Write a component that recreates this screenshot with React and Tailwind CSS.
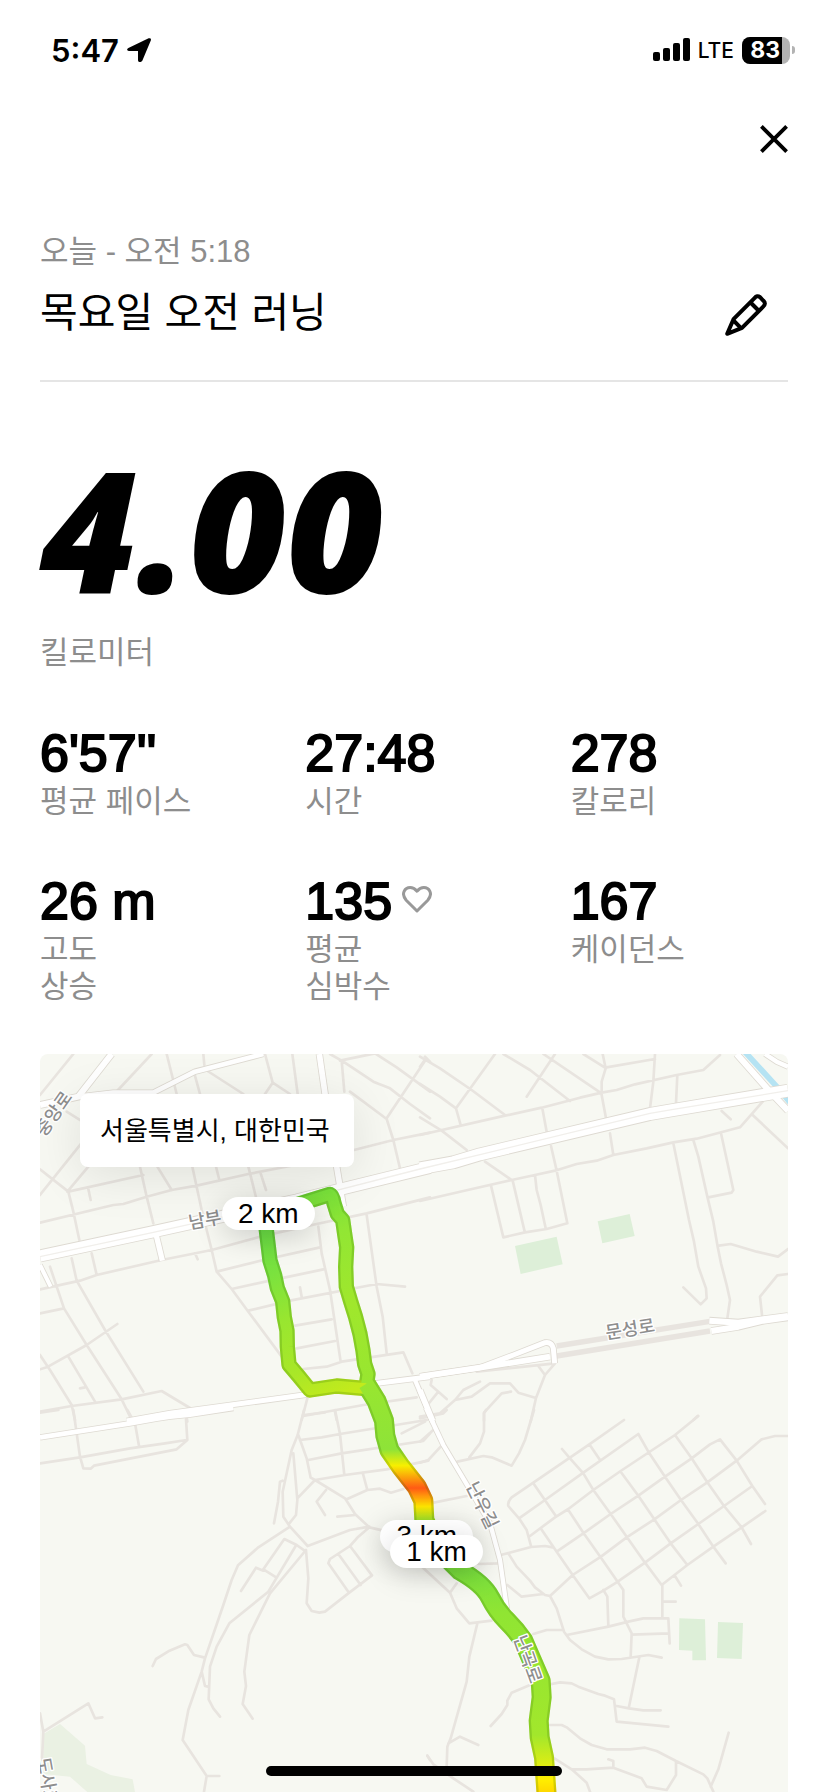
import React from "react";

const stats = [
  { value: "6'57''", label: ["평균 페이스"] },
  { value: "27:48", label: ["시간"] },
  { value: "278", label: ["칼로리"] },
  { value: "26 m", label: ["고도", "상승"] },
  { value: "135", label: ["평균", "심박수"], heart: true },
  { value: "167", label: ["케이던스"] },
];

// Streets are drawn per map tile, each tile has its own origin
const tiles = [
  {
    id: "nw",
    origin: "translate(-30 -42)",
    minor:
      "M30 165L130 42M250 165L365 42M410 42L440 162M520 42L523 75M528 90L640 162M493 100L510 162M705 42L728 128L705 162M728 128L780 162M787 42L803 162M900 42L940 65L1030 125L1080 145L1140 192L1200 235M930 62L1035 40L1100 82L1200 155M935 62L943 155M1190 55L1070 235M960 155L1070 237L1090 300L1110 385M972 330L1090 300L1200 278M1185 50L1200 65M30 388L115 455L130 515L148 600M30 465L190 265L110 215M112 455L175 380M115 455L340 405M175 447L182 480M330 380L350 470L370 550M382 380L425 450M30 548L250 495L280 492L350 470L425 450L500 437L655 402L780 378M487 380L515 510L545 630L560 695L605 747L655 815L755 950M558 380L568 420M655 380L680 480M692 400L708 450M30 748L150 722L200 705L395 660L545 630L690 590L860 552L1010 520L1200 472M125 655L140 722L225 870L340 1055M185 640L200 705M495 640L503 658M560 695L700 660L870 622M605 747L720 722L880 688M655 812L780 782L1040 732L1125 740M810 742L815 770M795 857L905 838M800 925L915 903M865 560L875 640L900 750L932 965M1010 525L1040 740L1058 830L1070 940M820 987L890 980L935 965L1120 937L1147 1000M30 820L102 805M30 945L60 990L125 1095L135 1140M30 988L50 982L170 915L262 852M60 680L102 805L170 915L275 1078L305 1140M115 950L195 1085M150 1045L165 1042M30 1115L125 1098L275 1078L395 1053L490 1110M470 1130L472 1145M832 1075L815 1140M820 1128L1000 1095L1160 1072M915 1115L920 1140",
    major: [
      { d: "M30 195L145 170L245 42", w: 18 },
      { d: "M145 170L250 158L370 158L495 95L700 42", w: 14 },
      { d: "M868 42L885 160L920 380L940 500", w: 17 },
      { d: "M375 570L397 662", w: 16 },
      { d: "M30 675L62 740", w: 12 },
      { d: "M30 648L370 575L800 480L1200 382", w: 34 },
      { d: "M290 1143L420 1120L820 1065L1000 1035L1200 1010", w: 15 },
      { d: "M1155 1020L1210 1150", w: 13 },
    ],
  },
  {
    id: "ne",
    origin: "translate(1140 -42)",
    minor:
      "M0 80L18 55M0 50L60 85L155 150L255 225M225 42L108 205L122 255M0 132L60 170L108 205M250 42L330 90L450 183M405 42L320 170M370 42L540 157M490 42L555 83L705 57M548 42L557 85L545 125L545 165L558 235M0 285L255 227L365 203L480 173L545 158L590 150L645 133L770 105L850 90L900 45M705 42L700 125L690 205M772 105L768 190M0 232L65 272L140 330M367 205L380 275M570 280L580 345M393 318L410 392L442 550L380 567L315 577L250 592L213 437M195 365L275 420M0 483L130 453L275 420L345 405L405 392L470 372L530 362L580 345L680 325L760 307L830 296L960 262L1028 185M278 422L314 575M345 405L350 450L362 495L377 565M905 213L932 238M998 225L1104 325M760 310L807 540L822 605L835 680L858 745L860 775L842 793L790 742M820 300L835 350L862 470L880 545L893 620L903 670L920 735L930 780L922 835M903 280L940 450L935 458L865 472M897 617L932 612L1010 635L1074 650L1104 627M1104 702L1072 706L1020 770L1026 825M0 1130L60 1120L105 1080L130 1050L180 1025M105 1080L155 1070L210 1030L270 1030L295 1058L348 1074M35 1020L32 1035L80 1077M55 1055L25 1092M192 1142L192 1118L245 1060L273 1055M355 978L375 1005L348 1074L332 1145M375 1005L405 970L170 995M820 1140L833 1128",
    major: [
      { d: "M1035 42L1070 65L1104 80", w: 13 },
      { d: "M0 385L100 367L180 343L690 222L760 210L1104 152", w: 36 },
      { d: "M950 42L1050 155L1104 212", w: 18 },
      { d: "M0 1010L180 983L280 945L375 908Q395 905 400 925L404 970", w: 15 },
      { d: "M0 1010L180 983L390 950", w: 17 },
      { d: "M868 842L955 848L1030 838L1104 828", w: 18 },
      { d: "M874 873L955 860L1030 842L1104 832", w: 18 },
      { d: "M0 1050L38 1142", w: 16 },
    ],
  },
  {
    id: "sw",
    origin: "translate(-30 1068)",
    minor:
      "M30 8L85 0M130 0L150 140L160 175L182 176L192 167L440 118L472 90L468 28M292 0L315 40L327 108M30 160L150 142L300 115L405 100L470 90M822 0L803 75L785 120L758 245L760 320L780 350L833 408M790 130L802 270L798 315L778 340M758 212L750 215L744 275L732 340M822 15L885 7M805 75L830 145L842 203L855 210L945 265L975 312L1018 352L1060 362M810 90L875 82L930 72L1190 30M915 0L930 72L943 195M835 150L935 130L1180 93L1200 70M855 210L945 195L1070 178L1195 152M1115 70L1185 35M855 210L802 265M888 240L860 275L885 315M998 188L1012 240L950 268M1012 240L1050 236L1083 248L1120 237M922 320L975 315M780 350L685 412L624 466L605 510L580 585L525 745L515 785L475 900L458 990L530 1098L522 1145M530 1098L568 1098M833 408L960 360L1018 350M1018 352L985 380L960 408L900 447L895 460L957 548M925 432L992 525M960 408L1026 496L955 550L885 605L868 608L845 603L830 580L835 505L828 420M828 425L800 405L763 387L700 478L735 500M633 543L678 473L700 482M797 408L715 545L598 640L560 710L540 770L536 868L550 895L570 920M828 420L720 550L658 675L643 785L648 828L638 882L668 926M368 768L378 747L415 724L465 703L472 705L492 735L525 743M515 785L525 828L534 830M40 965L175 880L195 925L217 922M30 910L40 965L36 1050M1192 1037L1200 1050",
    major: [{ d: "M30 82L300 40L380 26L420 20L480 14L610 -6", w: 14 }],
  },
  {
    id: "se",
    origin: "translate(1140 1068)",
    minor:
      "M0 25L70 10L80 0M0 95L40 60M0 158L25 150L62 110M198 0L192 10L192 65L180 100L148 142M112 155L190 138L215 142L275 167L297 130L315 90L342 0M30 280L140 258M612 30L508 103L340 218L275 262Q262 275 265 288L297 325L320 360L333 408M426 117L450 145L490 190L520 240L572 312L620 380L675 458L725 525M508 103L540 150M297 325L375 270L490 188L655 72L685 125L735 200L783 270L835 342L880 410L917 460M340 220L407 317M330 378L405 322L445 297L520 240L602 183L765 75L835 18M765 75L815 145L862 217L912 288L965 352L993 402M445 300L490 368L543 443L610 540L610 620L635 670L632 740M602 185L655 257L703 328L752 400L802 465M362 355L410 425L458 495L508 565L550 542L590 517L675 458L752 400L835 342L912 288L997 228M410 425L490 370L572 312L655 257L735 200L815 145L870 103L900 88L950 152L997 228L1035 282M390 558L458 495L543 440L620 382L703 328L783 270L862 217L950 152L1025 88L1065 78L1104 78M725 525L802 465L880 410L965 352L1036 303M765 498L783 527M242 435L333 411L375 408L398 412M175 462L240 460M265 430L290 470L330 512L345 532L375 555L390 558L410 595L432 665L450 690L485 718L525 740L565 748L605 747L685 735L725 743M262 525L305 560L370 552M340 672L380 660L430 660M440 675L565 650L625 635L670 625L745 625L749 700M550 540L562 560L565 648M727 525L727 620M727 575L767 575M635 674L747 670M0 465L90 548L110 595L148 640L215 632M110 520L90 548M172 640L148 740L140 815L92 985L82 1010L80 1070M85 1000L120 980L175 1005M658 742L627 890M212 948L245 912L262 885L262 872L275 848L330 825M380 825L420 817L455 820L475 830L535 852L555 857L582 868L590 935L745 950M590 888L627 895L670 901L722 901M385 945L425 945L440 952L480 985L515 1005L560 1018L630 1018L675 1013L710 1023L768 1053L850 1093L862 1105L880 1145M768 1053L768 1095L740 1140L680 1130L665 1105L580 1073L500 1078L455 1078L395 1040M580 1073L580 1053L565 1048M455 1078L500 1118L510 1145M872 1130L895 1078L926 968M22 1037L40 1063L100 1105L160 1145",
    major: [{ d: "M18 -6L70 105L210 340L240 450L262 605", w: 13 }],
  },
];

const routes = [
  {
    stroke: "url(#north)",
    width: 46,
    d: "M740 462L800 443L870 421Q878 424 882 448L892 480L908 498L914 540L920 580L917 638L919 698L932 742L947 790L960 840L969 890L974 930L984 960L978 1000",
  },
  {
    stroke: "url(#west)",
    width: 46,
    d: "M678 520L685 578L690 620L704 664L712 702L728 742L733 790L741 830L742 878L747 932L775 965L810 1008L890 996L978 1004",
  },
  {
    stroke: "url(#south)",
    width: 60,
    d: "M978 990L1010 1042L1032 1100L1036 1145L1048 1188L1084 1240L1130 1298L1150 1340L1153 1398L1190 1480L1260 1550Q1330 1590 1350 1630T1400 1700T1450 1760L1476 1820L1502 1880L1505 1930L1496 2000L1499 2050L1512 2110L1520 2225",
  },
];

const roadNames = [
  { text: "중앙로", at: "translate(56 190) rotate(-55)" },
  { text: "남부", at: "translate(498 516) rotate(-10)" },
  { text: "문성로", at: "translate(1773 844) rotate(-9)" },
  { text: "난우길", at: "translate(1310 1362) rotate(64)" },
  { text: "난곡로", at: "translate(1446 1822) rotate(70)" },
  { text: "도사로", at: "translate(4 2186) rotate(80)" },
];

const RunMap = () => (
  <svg viewBox="0 0 2244 2214" className="block w-full" aria-hidden="true">
    <defs>
      <linearGradient id="north" gradientUnits="userSpaceOnUse" x1="740" y1="430" x2="960" y2="1000">
        <stop offset="0" stopColor="#74e03c" />
        <stop offset="0.25" stopColor="#92e634" />
        <stop offset="0.6" stopColor="#a0e72c" />
        <stop offset="1" stopColor="#98e630" />
      </linearGradient>
      <linearGradient id="west" gradientUnits="userSpaceOnUse" x1="680" y1="520" x2="900" y2="1020">
        <stop offset="0" stopColor="#69dd45" />
        <stop offset="0.25" stopColor="#7be23e" />
        <stop offset="0.5" stopColor="#98e630" />
        <stop offset="0.8" stopColor="#a9e728" />
        <stop offset="1" stopColor="#c2ea1c" />
      </linearGradient>
      <linearGradient id="south" gradientUnits="userSpaceOnUse" x1="0" y1="990" x2="0" y2="2214">
        <stop offset="0" stopColor="#98e630" />
        <stop offset="0.16" stopColor="#8ee338" />
        <stop offset="0.2" stopColor="#f7ef00" />
        <stop offset="0.255" stopColor="#ff5a14" />
        <stop offset="0.3" stopColor="#ffe600" />
        <stop offset="0.335" stopColor="#a0e52c" />
        <stop offset="0.46" stopColor="#7ae03e" />
        <stop offset="0.56" stopColor="#90e533" />
        <stop offset="0.86" stopColor="#a2e72c" />
        <stop offset="0.92" stopColor="#d2ec18" />
        <stop offset="0.97" stopColor="#ffee00" />
        <stop offset="1" stopColor="#ffd800" />
      </linearGradient>
    </defs>

    <rect width="2244" height="2214" fill="#f7f8f2" />

    {/* parks and water */}
    <g fill="#ddefd8">
      <path d="M1425 576L1550 548L1568 631L1442 660Z" />
      <path d="M1673 502L1769 480L1784 546L1687 568Z" />
      <path d="M1918 1693L1995 1696L1998 1819H1957V1790L1917 1788Z" />
      <path d="M2034 1704L2109 1707L2105 1815L2031 1812Z" />
    </g>
    <path d="M10 2040L60 2010L135 2075L140 2130L212 2163L278 2176L285 2214H142L90 2168L10 2160Z" fill="#eaf1e3" />
    <path d="M2115 -6L2215 103L2250 145" stroke="#b5e3f3" strokeWidth="17" fill="none" />

    {/* tunnel */}
    <path d="M1550 876L2010 802M1550 906L2010 831" stroke="#e8e4df" strokeWidth="16" fill="none" />

    <g fill="none" strokeLinejoin="round" strokeLinecap="round">
      {tiles.map((t) => (
        <path key={t.id} transform={t.origin} d={t.minor} stroke="#e8e4df" strokeWidth="8" />
      ))}
    </g>
    <g fill="none" strokeLinejoin="round">
      {tiles.map((t) => (
        <g key={t.id} transform={t.origin} stroke="#dedad2">
          {t.major.map((r) => (
            <path key={r.d} d={r.d} strokeWidth={r.w + 5} />
          ))}
        </g>
      ))}
      {tiles.map((t) => (
        <g key={t.id} transform={t.origin} stroke="#ffffff">
          {t.major.map((r) => (
            <path key={r.d} d={r.d} strokeWidth={r.w} />
          ))}
        </g>
      ))}
      <path d="M0 608L340 535L770 440L1140 345L1320 302L1830 178L1900 166L2244 110" stroke="#f1efeb" strokeWidth="4" />
    </g>

    <g fill="none" strokeLinejoin="round">
      {routes.map((r) => (
        <g key={r.stroke}>
          <path d={r.d} stroke={r.stroke} strokeWidth={r.width} />
          <path d={r.d} stroke="#2d6a00" strokeOpacity="0.2" strokeWidth={r.width} />
        </g>
      ))}
      {routes.map((r) => (
        <path key={r.stroke} d={r.d} stroke={r.stroke} strokeWidth={r.width - 14} />
      ))}
    </g>

    <g
      className="font-['Noto_Sans_CJK_KR',sans-serif] font-medium"
      fontSize="54"
      fill="#8e8e8e"
      stroke="#ffffff"
      strokeWidth="8"
      strokeLinejoin="round"
      paintOrder="stroke"
      textAnchor="middle"
    >
      {roadNames.map((n) => (
        <text key={n.text} transform={n.at}>
          {n.text}
        </text>
      ))}
    </g>
  </svg>
);

const Pin = ({ children, className }) => (
  <span
    className={`absolute flex h-[33px] w-[93px] items-center justify-center rounded-full bg-white text-[28px] leading-none shadow-[0_6px_30px_rgba(0,0,0,0.18)] ${className}`}
  >
    {children}
  </span>
);

const StatusBar = () => (
  <div className="flex h-[100px] items-center justify-between pr-[33px] pl-[51px] font-['Inter',sans-serif]">
    <div className="flex items-center gap-2 text-[31px] leading-none font-semibold">
      5:47
      <svg viewBox="0 0 24 24" className="h-6 w-6">
        <path d="M1.4 10L21.600 .3Q24.600-.4 23.800 2.500L15.300 22.800Q14.300 24.300 12.400 24Q11 23.700 11 22.300V13H1.900Q.1 12.800 .1 11.600Q.2 10.600 1.400 10Z" />
      </svg>
    </div>
    <div className="flex items-center gap-2">
      <svg viewBox="0 0 37 24" className="h-6 w-[37px]">
        <rect x="0" y="14" width="7" height="9" rx="2" />
        <rect x="10" y="10" width="7" height="13" rx="2" />
        <rect x="20" y="5" width="7" height="18" rx="2" />
        <rect x="30" y="0" width="7" height="23" rx="2" />
      </svg>
      <span className="text-[21px] leading-none font-medium">LTE</span>
      <div className="flex items-center gap-[2px]">
        <div className="flex h-[27px] w-12 overflow-hidden rounded-lg bg-[#b3b3b3]">
          <span className="flex w-10 items-center justify-end bg-black pr-[2px] text-[23px] leading-none font-bold text-white">
            83
          </span>
        </div>
        <div className="h-2 w-[3px] rounded-r-full bg-[#b3b3b3]" />
      </div>
    </div>
  </div>
);

const App = () => {
  return (
    <div className="min-h-screen bg-white font-['Liberation_Sans','Noto_Sans_CJK_KR',sans-serif] text-black">
      <StatusBar />

      <div className="px-10">
        <div className="flex h-[78px] items-center justify-end">
          <button aria-label="닫기">
            <svg viewBox="0 0 28 28" className="h-7 w-7" stroke="#000" strokeWidth="3.8">
              <path d="M1.400 1.400L26.600 26.600M26.600 1.400L1.400 26.600" />
            </svg>
          </button>
        </div>

        <header className="mt-[54px] flex items-end justify-between border-b-2 border-[#e5e5e5] pr-[21px] pb-10">
          <div>
            <p className="text-[31px] leading-[40px] text-[#8d8d8d]">오늘 - 오전 5:18</p>
            <h1 className="mt-[14px] text-[41px] leading-[54px]">목요일 오전 러닝</h1>
          </div>
          <button aria-label="이름 수정" className="mb-1">
            <svg
              viewBox="0 0 42 42"
              className="h-[42px] w-[42px]"
              fill="none"
              stroke="#000"
              strokeWidth="4"
              strokeLinejoin="round"
            >
              <path d="M2.200 39.800L8.500 25.200L29.500 4.200Q32 .9 35 3.200L38.500 6.800Q41.400 9.500 38.200 12.600L17 33.800Z" />
              <path d="M25.500 8.500L33.500 16.500M8.500 26.500L15.800 33.800" />
            </svg>
          </button>
        </header>

        <section className="mt-[66px]">
          <p className="font-['Open_Sans',sans-serif] text-[168px] leading-[160px] font-extrabold italic">4.00</p>
          <p className="mt-[26px] text-[31px] leading-[37px] text-[#8d8d8d]">킬로미터</p>
        </section>

        <section className="mt-[52px] grid grid-cols-3 gap-x-12 gap-y-[51px]">
          {stats.map((s) => (
            <div key={s.value}>
              <div className="flex items-center gap-[10px] text-[52px] leading-[60px] [-webkit-text-stroke:2px_#000]">
                {s.value}
                {s.heart && (
                  <svg
                    viewBox="0 0 30 27"
                    className="mb-1 h-[27px] w-[30px]"
                    fill="none"
                    stroke="#999"
                    strokeWidth="3"
                    strokeLinejoin="round"
                  >
                    <path d="M15 25L4.200 14.200C-1.500 7.500 3 1.600 8.200 1.600C11.500 1.600 13.500 3.500 15 5.200C16.500 3.500 18.500 1.600 21.800 1.600C27 1.600 31.500 7.500 25.800 14.200Z" />
                  </svg>
                )}
              </div>
              {s.label.map((line) => (
                <p key={line} className="text-[31px] leading-[37px] text-[#8d8d8d]">
                  {line}
                </p>
              ))}
            </div>
          ))}
        </section>

        <section className="relative mt-[49px] overflow-hidden rounded-t-lg">
          <RunMap />
          <div className="absolute top-10 left-10 w-[274px] rounded-lg bg-white px-5 pt-[17px] pb-[15px] text-[26px] leading-[41px] shadow-[0_8px_50px_rgba(0,0,0,0.1)]">
            서울특별시, 대한민국
          </div>
          <Pin className="top-[19.4%] left-[24.3%]">2 km</Pin>
          <Pin className="top-[63.1%] left-[45.5%]">3 km</Pin>
          <Pin className="top-[65.200%] left-[46.8%]">1 km</Pin>
        </section>
      </div>

      <div className="fixed bottom-4 left-1/2 h-[10px] w-[296px] -translate-x-1/2 rounded-full bg-black" />
    </div>
  );
};

export default App;
